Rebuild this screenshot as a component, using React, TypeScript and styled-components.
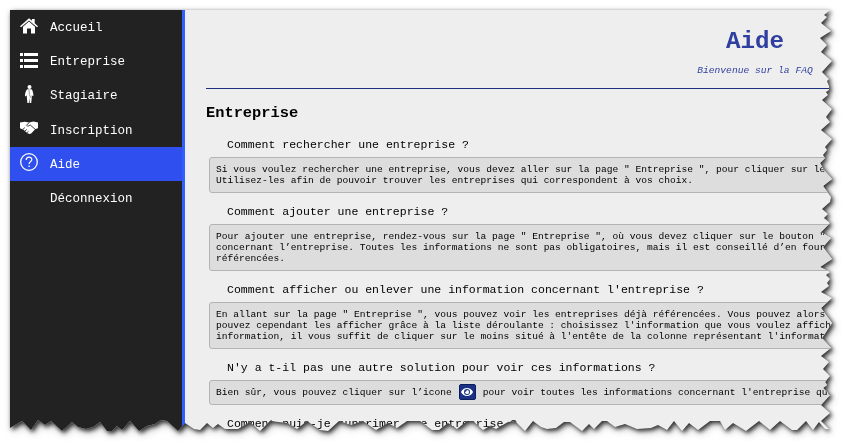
import React from "react";
import styled, { createGlobalStyle } from "styled-components";
import { FaEye } from "react-icons/fa";

const mono = '"Liberation Mono", monospace';

const TORN_EDGE: [number, number][] = [
  [0, 0], [820, 0], [814, 5], [817, 7], [811, 13], [821, 21], [810, 28], [817, 35], [811, 42], [822, 51],
  [812, 62], [819, 69], [817, 71], [819, 76], [819, 80], [816, 82], [818, 85], [812, 90], [822, 99], [816, 107],
  [820, 112], [811, 120], [822, 129], [815, 137], [817, 140], [813, 145], [815, 148], [810, 153], [814, 160],
  [822, 169], [813, 176], [821, 187], [820, 192], [812, 199], [818, 204], [814, 208], [820, 213], [811, 222],
  [821, 228], [813, 237], [822, 249], [810, 257], [820, 262], [816, 265], [820, 269], [817, 273], [819, 276],
  [811, 282], [822, 288], [811, 298], [822, 313], [812, 328], [821, 338], [811, 346], [819, 352], [813, 359],
  [820, 366], [815, 372], [817, 375], [813, 378], [820, 385], [811, 395], [820, 403], [811, 411], [819, 419],
  [815, 419], [809, 412], [803, 420], [796, 411], [787, 420], [782, 420], [770, 411], [760, 420], [749, 411],
  [736, 421], [723, 413], [715, 420], [710, 411], [700, 411], [688, 420], [679, 413], [672, 421], [664, 411],
  [657, 420], [648, 415], [641, 418], [627, 419], [615, 414], [605, 417], [597, 411], [592, 411], [584, 419],
  [579, 414], [572, 421], [560, 412], [554, 412], [546, 418], [537, 419], [531, 417], [523, 411], [515, 421],
  [505, 411], [498, 412], [486, 419], [480, 416], [473, 420], [463, 411], [457, 411], [447, 419], [438, 413],
  [429, 420], [422, 420], [410, 411], [397, 411], [387, 418], [378, 413], [366, 420], [353, 411], [341, 415],
  [329, 411], [318, 421], [310, 420], [297, 411], [287, 419], [277, 413], [260, 411], [250, 421], [240, 412],
  [228, 419], [215, 419], [208, 414], [203, 418], [197, 413], [190, 420], [184, 419], [175, 413], [168, 421],
  [157, 411], [151, 410], [145, 414], [137, 416], [129, 421], [120, 411], [112, 420], [107, 416], [102, 421],
  [97, 421], [90, 412], [83, 417], [76, 419], [68, 417], [62, 412], [52, 421], [41, 411], [35, 415], [28, 410],
  [21, 420], [12, 411], [5, 415], [0, 418],
];

const Global = createGlobalStyle`
  body { margin: 0; background: #fff; overflow: hidden; }
  * { box-sizing: border-box; }
`;

const Stage = styled.div`
  width: 849px;
  height: 448px;
  padding: 10px;
  overflow: hidden;
  filter: drop-shadow(2px 2px 2px rgba(0, 0, 0, 0.75)) drop-shadow(1px 2px 3px rgba(0, 0, 0, 0.3));
`;

const Sheet = styled.div`
  display: flex;
  width: 829px;
  height: 428px;
  overflow: hidden;
  background: #eee;
  font-family: ${mono};
  clip-path: polygon(${TORN_EDGE.map(([x, y]) => `${x}px ${y}px`).join(", ")});
`;

const Sidebar = styled.nav`
  flex: none;
  width: 175px;
  background: #222;
  border-right: 3px solid #2f5fff;
`;

const MenuItem = styled.a<{ $active?: boolean }>`
  display: flex;
  align-items: center;
  gap: 12px;
  height: 34.2px;
  padding-left: 10px;
  color: #fff;
  background: ${(p) => (p.$active ? "#2f4fef" : "transparent")};
  font-size: 12.5px;
`;

const IconSlot = styled.span`
  display: flex;
  flex: none;
  width: 18px;
  height: 18px;
  margin-top: -3px;
  svg { width: 18px; height: 18px; }
`;

const MenuLabel = styled.span`
  padding-top: 2px;
  white-space: nowrap;
`;

const Content = styled.main`
  flex: none;
  width: 1140px;
  padding: 0 21px;
`;

const PageHeader = styled.header`
  height: 79px;
  border-bottom: 1px solid #1a2f80;
  color: #2e3f9f;
  text-align: center;
`;

const Title = styled.h1`
  margin: 0;
  padding-top: 17px;
  font-size: 24.2px;
  line-height: 30px;
`;

const Subtitle = styled.p`
  margin: 0;
  padding-top: 8px;
  font-size: 9.65px;
  line-height: 12px;
  font-style: italic;
`;

const SectionTitle = styled.h2`
  height: 37px;
  margin: 0;
  padding-top: 15px;
  color: #000;
  font-size: 15.36px;
  line-height: 18px;
  font-weight: 600;
`;

const Question = styled.h3`
  height: 31px;
  margin: 0;
  padding: 11px 0 0 21px;
  color: #000;
  font-size: 11.52px;
  line-height: 16px;
  font-weight: 400;
  white-space: nowrap;
`;

const Answer = styled.p`
  margin: 0 3px;
  padding: 6px;
  border: 1px solid #b3b3b3;
  border-radius: 3px;
  background: #ddd;
  color: #000;
  font-size: 9.59px;
  line-height: 11px;
  white-space: pre;
`;

const InlineAnswer = styled(Answer)`
  display: flex;
  align-items: center;
  height: 25px;
  gap: 7px;
  padding: 0 6px;
`;

const EyeButton = styled.span`
  display: flex;
  align-items: center;
  justify-content: center;
  width: 17px;
  height: 16px;
  margin-top: -1px;
  border: 1px solid #0c1d5c;
  border-radius: 2px;
  background: #1a3188;
  color: #fff;
  svg { width: 12px; height: 12px; }
`;

const HomeIcon = () => (
  <svg viewBox="0 0 18 18" fill="#fff">
    <path d="M0 9.2 9 1.2l2.9 2.6V2h2.8v4.3L18 9.2l-1 1.1L9 3.4l-8 6.9z" />
    <path d="M3 9.8 9 4.6l6 5.2V16.5h-4v-5H7v5H3z" />
  </svg>
);

const ListIcon = () => (
  <svg viewBox="0 0 18 18" fill="#fff">
    <path d="M0 2h3v3H0zM4 2h14v3H4zM0 8h3v3H0zM4 8h14v3H4zM0 14h3v3H0zM4 14h14v3H4z" />
  </svg>
);

const PersonIcon = () => (
  <svg viewBox="0 0 18 18" fill="#fff">
    <circle cx="9.5" cy="2" r="2" />
    <path d="M7.5 4.3h4c1 .5 1.5 3 2 6.2l-.8.8-.8-1.3-.2 3.2-.5 4.8h-1.5l-.2-5-.7 5H7.4l-.5-5-.2-2.7-1 1.1-.8-.8C5.4 7.5 6 4.8 7.5 4.3z" />
    <path d="m9 5 .4 4.5L11 13" fill="none" stroke="#555" strokeWidth=".6" />
  </svg>
);

const HandshakeIcon = () => (
  <svg viewBox="0 0 18 18" fill="#fff">
    <path d="M0 3.6 4.6 2.7l3 .5 1.4.6 2-.9 2.5-.3L18 3.6v5.7l-2.6.8-4.2 4.3-1.7.7-2-.8-4.3-3.9L0 9.2z" />
    <path d="m8.8 3.9-2.3 2.4c.8 1.3 2.2 1 3.6-.4l5 4.3M2.9 10.2l2-1.6M4.9 12l2-1.7M7 13.7l1.6-1.5" fill="none" stroke="#333" strokeWidth=".9" />
  </svg>
);

const HelpIcon = () => (
  <svg viewBox="0 0 18 18" fill="none" stroke="#fff">
    <circle cx="9" cy="9" r="8.3" strokeWidth="1.3" />
    <path d="M6.2 7.1c0-4.1 5.8-3.7 5.6-.5-.1 1.8-2.7 2-2.7 4.5" strokeWidth="1.2" />
    <path d="M9.1 12.5v1.4" strokeWidth="1.3" />
  </svg>
);

const menu = [
  { label: "Accueil", icon: <HomeIcon /> },
  { label: "Entreprise", icon: <ListIcon /> },
  { label: "Stagiaire", icon: <PersonIcon /> },
  { label: "Inscription", icon: <HandshakeIcon /> },
  { label: "Aide", icon: <HelpIcon />, active: true },
  { label: "Déconnexion", icon: null },
];

const faq = [
  {
    question: "Comment rechercher une entreprise ?",
    answer:
      'Si vous voulez rechercher une entreprise, vous devez aller sur la page " Entreprise ", pour cliquer sur le\nUtilisez-les afin de pouvoir trouver les entreprises qui correspondent à vos choix.',
  },
  {
    question: "Comment ajouter une entreprise ?",
    answer:
      'Pour ajouter une entreprise, rendez-vous sur la page " Entreprise ", où vous devez cliquer sur le bouton "\nconcernant l’entreprise. Toutes les informations ne sont pas obligatoires, mais il est conseillé d’en four\nréférencées.',
  },
  {
    question: "Comment afficher ou enlever une information concernant l'entreprise ?",
    answer:
      'En allant sur la page " Entreprise ", vous pouvez voir les entreprises déjà référencées. Vous pouvez alors\npouvez cependant les afficher grâce à la liste déroulante : choisissez l\'information que vous voulez affich\ninformation, il vous suffit de cliquer sur le moins situé à l\'entête de la colonne représentant l\'informat',
  },
];

export default function App() {
  return (
    <>
      <Global />
      <Stage>
        <Sheet>
          <Sidebar>
            {menu.map((item) => (
              <MenuItem key={item.label} $active={item.active}>
                <IconSlot>{item.icon}</IconSlot>
                <MenuLabel>{item.label}</MenuLabel>
              </MenuItem>
            ))}
          </Sidebar>
          <Content>
            <PageHeader>
              <Title>Aide</Title>
              <Subtitle>Bienvenue sur la FAQ</Subtitle>
            </PageHeader>
            <SectionTitle>Entreprise</SectionTitle>
            {faq.map((entry) => (
              <React.Fragment key={entry.question}>
                <Question>{entry.question}</Question>
                <Answer>{entry.answer}</Answer>
              </React.Fragment>
            ))}
            <Question>N'y a t-il pas une autre solution pour voir ces informations ?</Question>
            <InlineAnswer as="div">
              <span>Bien sûr, vous pouvez cliquer sur l’icone</span>
              <EyeButton><FaEye /></EyeButton>
              <span>pour voir toutes les informations concernant l'entreprise que</span>
            </InlineAnswer>
            <Question>Comment puis-je supprimer une entreprise ?</Question>
          </Content>
        </Sheet>
      </Stage>
    </>
  );
}
